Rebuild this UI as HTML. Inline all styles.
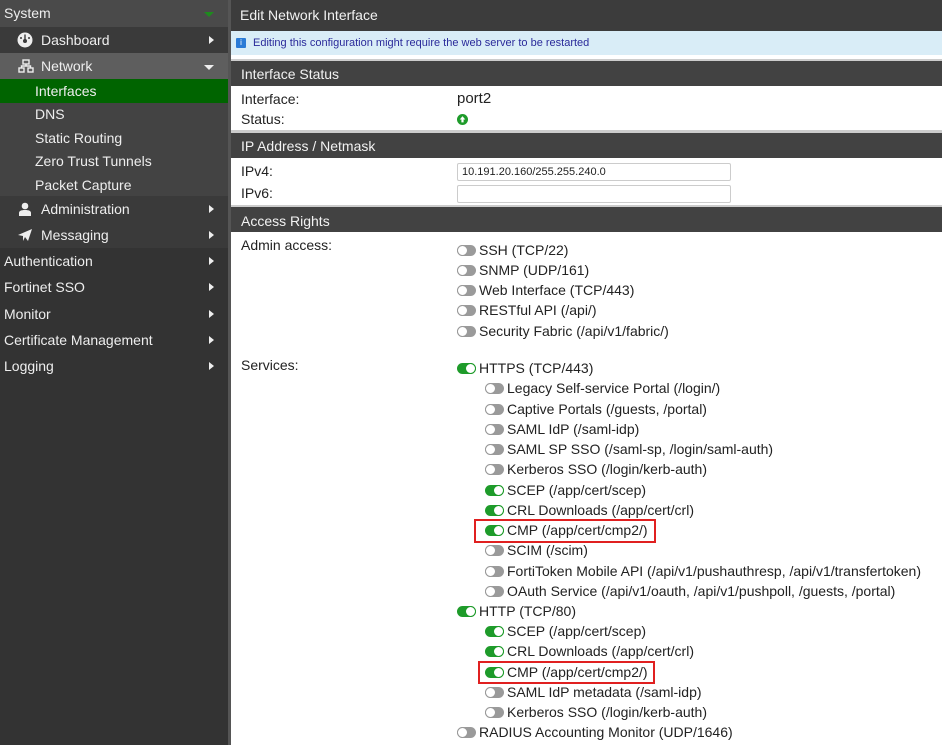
<!DOCTYPE html>
<html><head><meta charset="utf-8"><style>
*{margin:0;padding:0;box-sizing:border-box}
body{width:942px;height:745px;overflow:hidden;background:#fff;font-family:"Liberation Sans",sans-serif;font-size:14px;color:#222;position:relative}
.a{position:absolute;white-space:nowrap}
#side{position:absolute;left:0;top:0;width:230px;height:745px;background:#333}
.sr{position:absolute;left:0;width:228px;color:#eee;font-size:14px;line-height:26px}
.arr{position:absolute;right:14px;top:9px;width:0;height:0;border-top:4px solid transparent;border-bottom:4px solid transparent;border-left:5px solid #eee}
.bar{position:absolute;left:231px;width:711px;background:#424242;color:#f2f2f2;font-size:14px;padding-left:10px}
.lbl{position:absolute;left:241px;line-height:20px}
.t{position:absolute;height:20px;line-height:20px;white-space:nowrap;padding-left:22px}
.t::before{content:"";position:absolute;left:0;top:5px;width:19px;height:11px;border-radius:6px;background:#9a9a9a}
.t::after{content:"";position:absolute;left:0;top:5px;width:11px;height:11px;border-radius:50%;background:#fff;box-sizing:border-box;border:1.5px solid #9a9a9a}
.t.on::before{background:#1e9b2a}
.t.on::after{left:8px;border-color:#1e9b2a}
.inp{position:absolute;left:457px;width:274px;height:18px;border:1px solid #ccc;border-radius:2px;font-size:11px;line-height:16px;padding-left:4px}
</style></head><body>
<div id="side">
<div class="sr" style="top:0;height:27px;background:#4a4a4a;padding-left:4px">System<span style="position:absolute;right:14px;top:12px;border-left:5px solid transparent;border-right:5px solid transparent;border-top:5px solid #1e8a1e"></span></div>
<div class="sr" style="top:27px;height:26px;background:#3a3a3a;padding-left:41px">Dashboard<span class="arr"></span>
<svg style="position:absolute;left:17px;top:5px" width="16" height="16" viewBox="0 0 16 16"><circle cx="8" cy="8" r="7.5" fill="#eee"/><circle cx="8" cy="9" r="2" fill="#3a3a3a"/><rect x="7.3" y="2.5" width="1.4" height="5" fill="#3a3a3a"/><circle cx="4" cy="6" r="1" fill="#3a3a3a"/><circle cx="12" cy="6" r="1" fill="#3a3a3a"/></svg></div>
<div class="sr" style="top:53px;height:26px;background:#5e5e5e;padding-left:41px">Network<span style="position:absolute;right:14px;top:12px;border-left:5px solid transparent;border-right:5px solid transparent;border-top:5px solid #eee"></span>
<svg style="position:absolute;left:18px;top:6px" width="16" height="14" viewBox="0 0 16 14" fill="none" stroke="#eee" stroke-width="1.4"><rect x="5" y="1" width="6" height="4"/><rect x="1" y="9" width="5" height="4"/><rect x="10" y="9" width="5" height="4"/><path d="M8 5v2M3.5 9V7h9v2"/></svg></div>
<div class="sr" style="top:79px;height:24px;line-height:24px;background:#006400;padding-left:35px">Interfaces</div>
<div style="position:absolute;top:103px;left:0;width:228px;height:93px;background:#434343"></div>
<div class="sr" style="top:101px;padding-left:35px">DNS</div>
<div class="sr" style="top:125px;padding-left:35px">Static Routing</div>
<div class="sr" style="top:148px;padding-left:35px">Zero Trust Tunnels</div>
<div class="sr" style="top:172px;padding-left:35px">Packet Capture</div>
<div class="sr" style="top:196px;height:26px;background:#3a3a3a;padding-left:41px">Administration<span class="arr"></span>
<svg style="position:absolute;left:18px;top:6px" width="14" height="14" viewBox="0 0 14 14" fill="#eee"><circle cx="7" cy="4" r="3.3"/><path d="M1 14v-3c0-2 2-3 6-3s6 1 6 3v3z"/></svg></div>
<div class="sr" style="top:222px;height:26px;background:#3a3a3a;padding-left:41px">Messaging<span class="arr"></span>
<svg style="position:absolute;left:17px;top:6px" width="16" height="14" viewBox="0 0 16 14" fill="#eee"><path d="M1 7L15 1 11 13 8 9 6 13 6 8z"/></svg></div>
<div class="sr" style="top:248px;padding-left:4px">Authentication<span class="arr"></span></div>
<div class="sr" style="top:274px;padding-left:4px">Fortinet SSO<span class="arr"></span></div>
<div class="sr" style="top:301px;padding-left:4px">Monitor<span class="arr"></span></div>
<div class="sr" style="top:327px;padding-left:4px">Certificate Management<span class="arr"></span></div>
<div class="sr" style="top:353px;padding-left:4px">Logging<span class="arr"></span></div>
</div>
<div style="position:absolute;left:228px;top:0;width:3px;height:745px;background:#555"></div>

<div class="bar" style="top:0;height:31px;line-height:31px;background:#3c3c3c;padding-left:9px">Edit Network Interface</div>
<div class="a" style="left:231px;top:31px;width:711px;height:24px;background:#d9edf7;color:#2a2a9a;font-size:11px;line-height:24px;padding-left:22px">Editing this configuration might require the web server to be restarted</div>
<div class="a" style="left:236px;top:38px;width:10px;height:10px;background:#2b7bd6;border-radius:1px;color:#fff;font-size:8px;line-height:10px;text-align:center">i</div>
<div class="a" style="left:231px;top:59px;width:711px;height:2px;background:#ccc"></div>
<div class="bar" style="top:61px;height:25px;line-height:26px">Interface Status</div>
<div class="lbl" style="top:89px">Interface:</div>
<div class="a" style="left:457px;top:89px;line-height:20px;font-size:15px">port2</div>
<div class="lbl" style="top:109px">Status:</div>
<svg class="a" style="left:457px;top:114px" width="11" height="11" viewBox="0 0 11 11"><circle cx="5.5" cy="5.5" r="5.5" fill="#1e9b2a"/><path d="M5.5 2.3L8.3 5.5H6.6V8.4H4.4V5.5H2.7z" fill="#fff"/></svg>
<div class="a" style="left:231px;top:130px;width:711px;height:3px;background:#ccc"></div>
<div class="bar" style="top:133px;height:25px;line-height:26px">IP Address / Netmask</div>
<div class="lbl" style="top:161px">IPv4:</div>
<div class="inp" style="top:163px">10.191.20.160/255.255.240.0</div>
<div class="lbl" style="top:183px">IPv6:</div>
<div class="inp" style="top:185px"></div>
<div class="a" style="left:231px;top:205px;width:711px;height:2px;background:#ccc"></div>
<div class="bar" style="top:207px;height:25px;line-height:28px">Access Rights</div>
<div class="lbl" style="top:235px">Admin access:</div>
<div class="t" style="left:457px;top:240px">SSH (TCP/22)</div>
<div class="t" style="left:457px;top:260px">SNMP (UDP/161)</div>
<div class="t" style="left:457px;top:280px">Web Interface (TCP/443)</div>
<div class="t" style="left:457px;top:300px">RESTful API (/api/)</div>
<div class="t" style="left:457px;top:321px">Security Fabric (/api/v1/fabric/)</div>
<div class="lbl" style="top:355px">Services:</div>
<div class="t on" style="left:457px;top:358px">HTTPS (TCP/443)</div>
<div class="t" style="left:485px;top:378px">Legacy Self-service Portal (/login/)</div>
<div class="t" style="left:485px;top:399px">Captive Portals (/guests, /portal)</div>
<div class="t" style="left:485px;top:419px">SAML IdP (/saml-idp)</div>
<div class="t" style="left:485px;top:439px">SAML SP SSO (/saml-sp, /login/saml-auth)</div>
<div class="t" style="left:485px;top:459px">Kerberos SSO (/login/kerb-auth)</div>
<div class="t on" style="left:485px;top:480px">SCEP (/app/cert/scep)</div>
<div class="t on" style="left:485px;top:500px">CRL Downloads (/app/cert/crl)</div>
<div class="t on" style="left:485px;top:520px">CMP (/app/cert/cmp2/)</div>
<div class="a" style="left:474px;top:519px;width:182px;height:24px;border:2px solid #e02020"></div>
<div class="t" style="left:485px;top:540px">SCIM (/scim)</div>
<div class="t" style="left:485px;top:561px">FortiToken Mobile API (/api/v1/pushauthresp, /api/v1/transfertoken)</div>
<div class="t" style="left:485px;top:581px">OAuth Service (/api/v1/oauth, /api/v1/pushpoll, /guests, /portal)</div>
<div class="t on" style="left:457px;top:601px">HTTP (TCP/80)</div>
<div class="t on" style="left:485px;top:621px">SCEP (/app/cert/scep)</div>
<div class="t on" style="left:485px;top:641px">CRL Downloads (/app/cert/crl)</div>
<div class="t on" style="left:485px;top:662px">CMP (/app/cert/cmp2/)</div>
<div class="a" style="left:478px;top:661px;width:177px;height:23px;border:2px solid #e02020"></div>
<div class="t" style="left:485px;top:682px">SAML IdP metadata (/saml-idp)</div>
<div class="t" style="left:485px;top:702px">Kerberos SSO (/login/kerb-auth)</div>
<div class="t" style="left:457px;top:722px">RADIUS Accounting Monitor (UDP/1646)</div>
</body></html>
